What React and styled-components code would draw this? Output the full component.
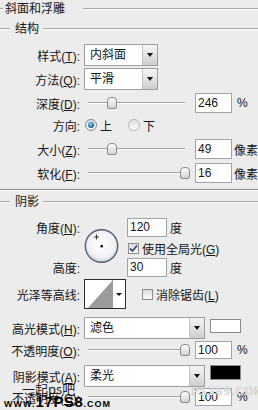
import React from 'react';
import styled, { createGlobalStyle } from 'styled-components';

const GlobalStyle = createGlobalStyle`
  html, body { margin: 0; padding: 0; background: #ececec; }
  body {
    font-family: "Liberation Sans", "Noto Sans CJK SC", sans-serif;
    font-size: 12px;
    color: #151515;
  }
  u { text-underline-offset: 1px; }
`;

const Panel = styled.div`
  position: relative;
  width: 258px;
  height: 410px;
  overflow: hidden;
  background: #ececec;
`;

const TitleBar = styled.div`
  display: flex;
  align-items: center;
  height: 18px;
`;

const Rule = styled.div`
  height: 0;
  border-top: 1px solid #a8a8a8;
  border-bottom: 1px solid #fbfbfb;
  flex: ${p => (p.$w ? 'none' : 1)};
  width: ${p => (p.$w ? `${p.$w}px` : 'auto')};
`;

const Title = styled.span`
  padding: 0 18px 0 2px;
  line-height: 18px;
  white-space: nowrap;
`;

const GroupHeader = styled.div`
  display: flex;
  align-items: center;
  height: 14px;
  margin-top: ${p => p.$mt}px;
`;

const GroupName = styled.span`
  padding: 0 4px 0 5px;
  white-space: nowrap;
  line-height: 14px;
`;

const Separator = styled.div`
  margin-top: 5px;
  height: 0;
  border-top: 1px solid #8e8e8e;
  border-bottom: 1px solid #fff;
`;

const Row = styled.div`
  display: flex;
  align-items: center;
  height: ${p => p.$h || 22}px;
  margin-top: ${p => p.$mt || 0}px;
`;

const Label = styled.span`
  flex: none;
  width: 80px;
  margin-right: 4px;
  text-align: right;
  white-space: nowrap;
`;

const Select = styled.div`
  display: flex;
  width: ${p => p.$w}px;
  height: 22px;
  box-sizing: border-box;
  border: 1px solid #9d9d9d;
  background: #fff;
`;

const SelectText = styled.span`
  flex: 1;
  padding-left: 5px;
  line-height: 20px;
  white-space: nowrap;
`;

const SelectArrow = styled.span`
  flex: none;
  width: 14px;
  display: flex;
  align-items: center;
  justify-content: center;
  border-left: 1px solid #c6c6c6;
  background: linear-gradient(#f6f6f6, #cdcdcd);
  &::after {
    content: '';
    border-left: 3px solid transparent;
    border-right: 3px solid transparent;
    border-top: 4px solid #111;
  }
`;

const NumberBox = styled.span`
  flex: none;
  width: ${p => p.$w || 37}px;
  height: ${p => p.$h || 20}px;
  box-sizing: border-box;
  border: 1px solid #a4a4a4;
  background: #fff;
  padding-left: 2px;
  line-height: ${p => (p.$h || 20) - 2}px;
`;

const Unit = styled.span`
  margin-left: ${p => p.$ml || 5}px;
  white-space: nowrap;
`;

const Slider = styled.div`
  position: relative;
  flex: none;
  display: flex;
  align-items: center;
  width: 107px;
  height: 14px;
  padding: 0 6px 0 4px;
  box-sizing: border-box;
  margin-right: 4px;
`;

const Track = styled.div`
  flex: 1;
  height: 0;
  border-top: 1px solid #a3a3a3;
  border-bottom: 1px solid #fff;
`;

const Thumb = styled.div`
  position: absolute;
  top: 50%;
  width: 8px;
  height: 10px;
  margin: -6px 0 0 -5px;
  border: 1px solid #8c8c8c;
  border-radius: 4px 4px 2px 2px;
  background: linear-gradient(#ffffff, #d2d2d2);
`;

const Radio = styled.span`
  flex: none;
  position: relative;
  width: 12px;
  height: 12px;
  box-sizing: border-box;
  border-radius: 50%;
  border: 1px solid ${p => (p.$on ? '#7c8693' : '#b7b7b7')};
  background: linear-gradient(#dedede, #fafafa);
  margin-left: ${p => p.$ml || 0}px;
  &::after {
    content: '';
    display: ${p => (p.$on ? 'block' : 'none')};
    position: absolute;
    left: 2px;
    top: 2px;
    width: 6px;
    height: 6px;
    border-radius: 50%;
    background: radial-gradient(circle at 40% 35%, #9ad3f2, #1d6fa6 60%, #0f4470);
  }
`;

const OptionText = styled.span`
  margin-left: 3px;
  white-space: nowrap;
`;

const CheckBox = styled.span`
  flex: none;
  display: inline-flex;
  align-items: center;
  justify-content: center;
  width: 11px;
  height: 11px;
  box-sizing: border-box;
  border: 1px solid #8d8d8d;
  background: linear-gradient(#dcdcdc, #fbfbfb);
  margin-left: ${p => p.$ml || 0}px;
`;

const AngleGrid = styled.div`
  display: grid;
  grid-template-columns: 84px 43px auto;
  grid-template-rows: 21px 20px 19px;
  margin-top: 8px;
`;

const GridLabel = styled.span`
  grid-column: 1;
  grid-row: ${p => p.$row};
  align-self: center;
  padding-right: 4px;
  text-align: right;
  white-space: nowrap;
`;

const GridCell = styled.div`
  grid-column: 3;
  grid-row: ${p => p.$row};
  display: flex;
  align-items: center;
`;

const Dial = styled.svg`
  grid-column: 2;
  grid-row: 1 / 4;
  align-self: center;
  display: block;
`;

const ContourBox = styled.div`
  flex: none;
  display: flex;
  width: 42px;
  height: 30px;
  box-sizing: border-box;
  border: 1px solid #2e2e2e;
  background: #fff;
`;

const ContourPreview = styled.svg`
  flex: 1;
  display: block;
`;

const ContourArrow = styled.span`
  flex: none;
  width: 12px;
  display: flex;
  align-items: center;
  justify-content: center;
  border-left: 1px solid #9a9a9a;
  &::after {
    content: '';
    border-left: 3px solid transparent;
    border-right: 3px solid transparent;
    border-top: 3px solid #111;
  }
`;

const Swatch = styled.span`
  flex: none;
  align-self: flex-start;
  margin: ${p => p.$mt}px 0 0 5px;
  width: 31px;
  height: ${p => p.$h}px;
  box-sizing: border-box;
  border: 1px solid #8a8a8a;
  background: ${p => p.$color};
`;

const Mark = styled.span`
  position: absolute;
  white-space: nowrap;
  pointer-events: none;
`;

const SiteMark = styled(Mark)`
  left: 22px;
  top: 379px;
  font-size: 13px;
  color: #1d1d1d;
  font-family: "Noto Sans CJK SC", sans-serif;
`;

const UrlMark = styled(Mark)`
  left: 4px;
  top: 395px;
  font-family: "Liberation Sans", sans-serif;
  font-weight: bold;
  color: #000;
  line-height: 13px;
`;

const UrlSmall = styled.span`
  font-size: 9px;
  letter-spacing: 1px;
`;

const UrlBig = styled.span`
  font-size: 15px;
  letter-spacing: 0.6px;
`;

const CornerMark = styled(Mark)`
  left: 192px;
  top: 385px;
  font-size: 11px;
  letter-spacing: 1px;
  font-family: "DejaVu Sans", sans-serif;
  color: #f6f6f6;
  text-shadow: 0 0 1px #9a9a9a, 0 0 1px #9a9a9a;
`;

function Check() {
  return (
    <svg width="9" height="9" viewBox="0 0 9 9">
      <path d="M1 4.5 L3.5 7 L8 1.5" fill="none" stroke="#34507c" strokeWidth="1.8" />
    </svg>
  );
}

function SliderField({ pos }) {
  return (
    <Slider>
      <Track />
      <Thumb style={{ left: `${4 + 97 * pos}px` }} />
    </Slider>
  );
}

function SliderRow({ label, k, value, unit, pos, mt, ml, h, boxH }) {
  return (
    <Row $mt={mt} $h={h}>
      <Label>{label}(<u>{k}</u>):</Label>
      <SliderField pos={pos} />
      <NumberBox $h={boxH}>{value}</NumberBox>
      <Unit $ml={ml}>{unit}</Unit>
    </Row>
  );
}

export default function App() {
  return (
    <Panel>
      <GlobalStyle />
      <TitleBar>
        <Rule $w={3} />
        <Title>斜面和浮雕</Title>
        <Rule />
      </TitleBar>

      <GroupHeader $mt={4}>
        <Rule $w={10} />
        <GroupName>结构</GroupName>
        <Rule />
      </GroupHeader>

      <Row $mt={8}>
        <Label>样式(<u>T</u>):</Label>
        <Select $w={74}>
          <SelectText>内斜面</SelectText>
          <SelectArrow />
        </Select>
      </Row>
      <Row $mt={2}>
        <Label>方法(<u>Q</u>):</Label>
        <Select $w={74}>
          <SelectText>平滑</SelectText>
          <SelectArrow />
        </Select>
      </Row>

      <SliderRow label="深度" k="D" value="246" unit="%" pos={0.25} mt={2} />

      <Row>
        <Label>方向:</Label>
        <Radio $on $ml={1} />
        <OptionText>上</OptionText>
        <Radio $ml={16} />
        <OptionText>下</OptionText>
      </Row>

      <SliderRow label="大小" k="Z" value="49" unit="像素" pos={0.25} mt={2} ml={2} />
      <SliderRow label="软化" k="F" value="16" unit="像素" pos={1} mt={2} ml={2} />

      <Separator />

      <GroupHeader $mt={4}>
        <Rule $w={10} />
        <GroupName>阴影</GroupName>
        <Rule />
      </GroupHeader>

      <AngleGrid>
        <GridLabel $row={1}>角度(<u>N</u>):</GridLabel>
        <Dial width="36" height="36" viewBox="0 0 36 36">
          <defs>
            <radialGradient id="dialFill" cx="50%" cy="45%" r="55%">
              <stop offset="0%" stopColor="#ffffff" />
              <stop offset="75%" stopColor="#f1f1f4" />
              <stop offset="100%" stopColor="#c9ccd6" />
            </radialGradient>
          </defs>
          <circle cx="17.5" cy="17" r="16.2" fill="url(#dialFill)" stroke="#56607a" strokeWidth="1.4" />
          <rect x="16.5" y="16" width="2.4" height="2.4" fill="#000" />
          <path d="M12.5 5.5 V10.5 M10 8 H15" stroke="#222" strokeWidth="0.9" />
        </Dial>
        <GridCell $row={1}>
          <NumberBox $w={40} $h={19}>120</NumberBox>
          <Unit $ml={3}>度</Unit>
        </GridCell>
        <GridCell $row={2}>
          <CheckBox $ml={1}><Check /></CheckBox>
          <OptionText>使用全局光(<u>G</u>)</OptionText>
        </GridCell>
        <GridLabel $row={3}>高度:</GridLabel>
        <GridCell $row={3}>
          <NumberBox $w={40} $h={19}>30</NumberBox>
          <Unit $ml={3}>度</Unit>
        </GridCell>
      </AngleGrid>

      <Row $mt={2} $h={30}>
        <Label>光泽等高线:</Label>
        <ContourBox>
          <ContourPreview viewBox="0 0 28 28" preserveAspectRatio="none">
            <polygon points="3,28 28,1 28,28" fill="#9b9b9b" />
          </ContourPreview>
          <ContourArrow />
        </ContourBox>
        <CheckBox $ml={16} />
        <OptionText>消除锯齿(<u>L</u>)</OptionText>
      </Row>

      <Row $mt={7} $h={24}>
        <Label>高光模式(<u>H</u>):</Label>
        <Select $w={121}>
          <SelectText>滤色</SelectText>
          <SelectArrow />
        </Select>
        <Swatch $color="#fff" $mt={3} $h={14} />
      </Row>
      <SliderRow label="不透明度" k="O" value="100" unit="%" pos={1} h={20} boxH={18} />

      <Row $mt={5}>
        <Label>阴影模式(<u>A</u>):</Label>
        <Select $w={121}>
          <SelectText>柔光</SelectText>
          <SelectArrow />
        </Select>
        <Swatch $color="#000" $mt={0} $h={15} />
      </Row>
      <SliderRow label="不透明度" k="C" value="100" unit="%" pos={1} h={20} boxH={18} />

      <SiteMark>一起ps吧</SiteMark>
      <UrlMark>
        <UrlSmall>WWW.</UrlSmall>
        <UrlBig>17PS8</UrlBig>
        <UrlSmall>.COM</UrlSmall>
      </UrlMark>
      <CornerMark>PS369.COM</CornerMark>
    </Panel>
  );
}
